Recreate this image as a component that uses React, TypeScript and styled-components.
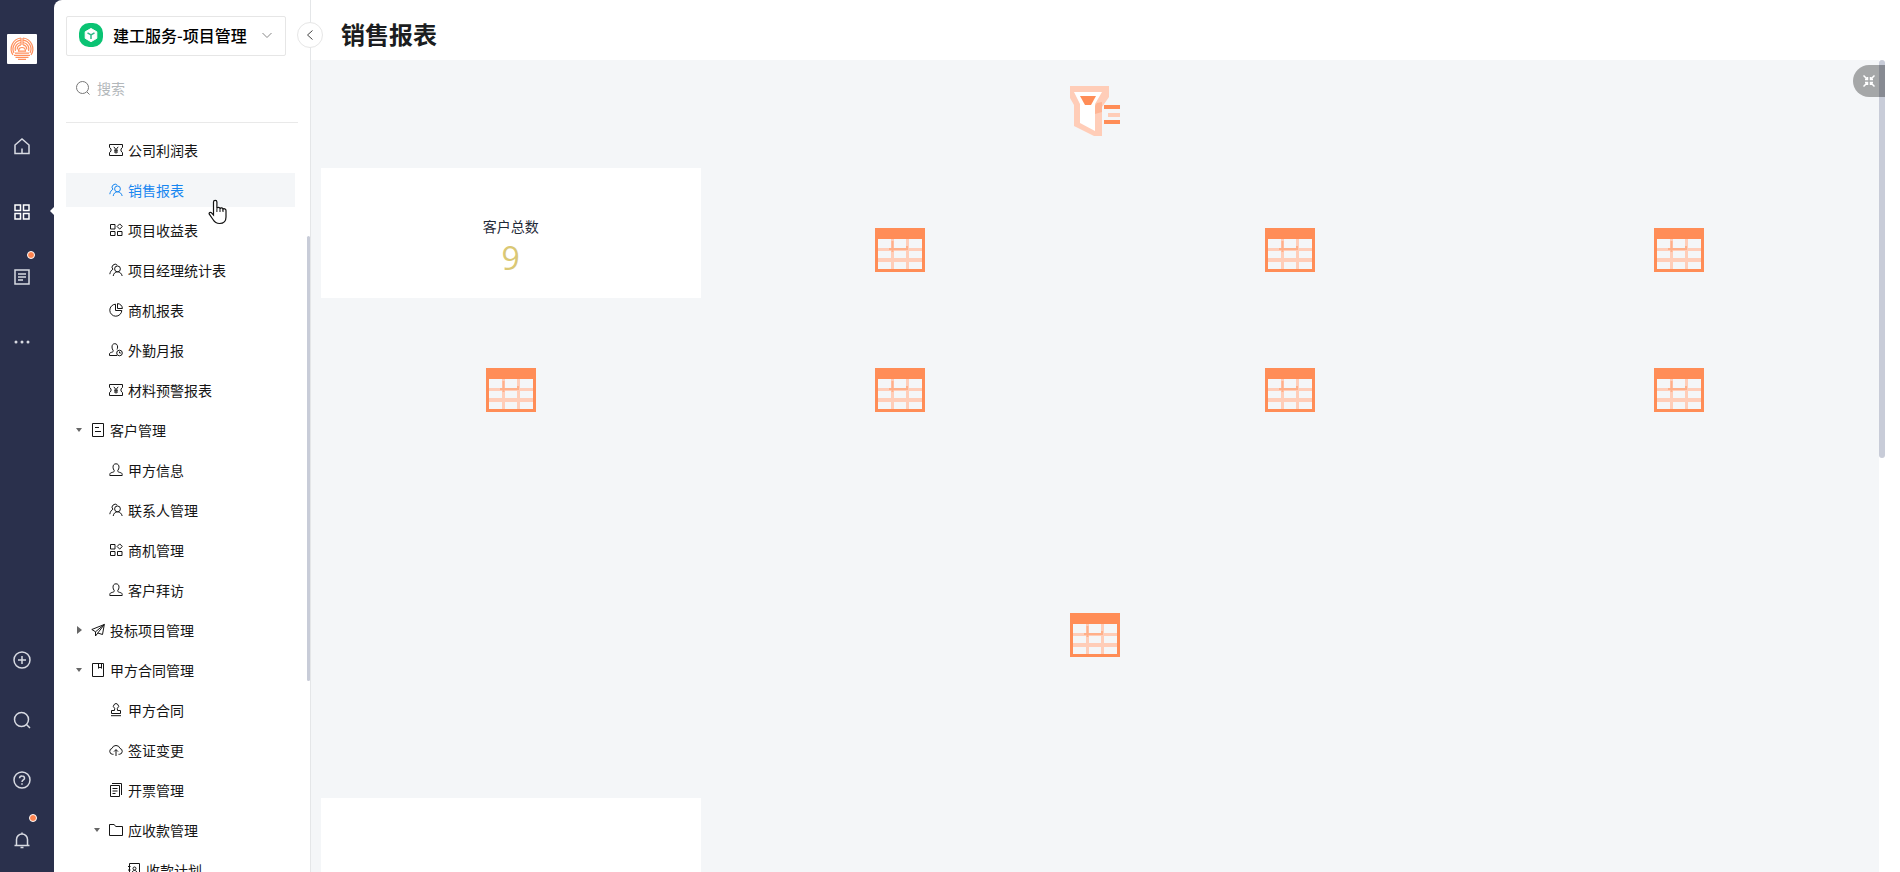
import React from "react";
import styled, { createGlobalStyle } from "styled-components";

const GlobalStyle = createGlobalStyle`
  * { box-sizing: border-box; }
  body {
    margin: 0;
    font-family: "Noto Sans CJK SC", "Liberation Sans", sans-serif;
    font-size: 14px;
    color: #151515;
    background: #fff;
  }
  button, input { font: inherit; color: inherit; }
  a { color: inherit; text-decoration: none; }
`;

/* ---------- icons ---------- */

type IconName =
  | "ticket" | "users" | "widgets" | "pie" | "userClock" | "user" | "form" | "send"
  | "bookmark" | "stamp" | "cloud" | "copy" | "folder" | "contact";

const shapes: Record<IconName, React.ReactNode> = {
  ticket: (
    <>
      <path d="M.5 1.5h13v2.800L12 6v2l1.500 1.700v2.800H.5V9.700L2 8V6L.5 4.300z" />
      <path d="M4.800 3.800 7 6.600l2.200-2.800M7 6.600v4M5 7.200h4M5 9h4" />
    </>
  ),
  users: (
    <>
      <path d="M8.500 8.800a2.900 2.900 0 1 0 0-5.800 2.900 2.900 0 0 0 0 5.800zM4.200 13c.4-2.600 2-4.200 4.300-4.200s4 1.600 4.700 4.200" />
      <path d="M8.300 2.200A2.900 2.900 0 1 0 3.900 6.300C2.200 7.200 1.200 8.900.8 11.200" />
    </>
  ),
  widgets: (
    <>
      <path d="M1.500 1.500h4.500v4.500H1.500zM1.500 8.500h4.500v4H1.500zM8.500 8.500h4.500v4H8.500z" />
      <path d="M10.700.9 13.300 3.500 10.700 6.100 8.100 3.500z" />
    </>
  ),
  pie: (
    <>
      <path d="M6.500 1.200a6 6 0 1 0 6.300 6.300H6.500z" />
      <path d="M8.500.6v4.900h4.900A5 5 0 0 0 8.500.6z" />
    </>
  ),
  userClock: (
    <>
      <path d="M8 12.500H.5V11c0-1 .7-1.300 2-1.700 1.500-.4 2-.8 1.700-1.800C3.400 6.500 3 5.500 3 4c0-2 1-3.300 2.800-3.300S8.600 2 8.600 4c0 1-.2 1.800-.6 2.500" />
      <circle cx="10.500" cy="10" r="2.800" />
      <path d="M10.500 8.500V10h1.300" />
    </>
  ),
  user: (
    <path d="M7 .8C5 .8 4 2.200 4 4.200c0 1.400.5 2.300 1.200 3.200.5 1-.2 1.500-1.900 2C1.500 9.900.8 10.200.8 11.500v1h12.400v-1c0-1.300-.7-1.600-2.500-2.100-1.700-.5-2.400-1-1.900-2C9.500 6.500 10 5.600 10 4.200 10 2.200 9 .8 7 .8z" />
  ),
  form: (
    <>
      <path d="M1.500.5h11v13h-11z" />
      <path d="M4 4.500h4M4 8.500h6" />
    </>
  ),
  send: <path d="M13.300 1.500.8 6.500l3.700 2.300L13.300 1.500 11.500 11.500 6.800 10zM4.500 8.800v4.200L6.800 10" />,
  bookmark: (
    <>
      <path d="M1.500.5h11v13h-11z" />
      <path d="M7.500.5v4.800L9 4l1.500 1.300V.5" />
    </>
  ),
  stamp: (
    <>
      <path d="M5.700 5.300a2.500 2.500 0 1 1 2.600 0l.2 2.200h3v3h-9v-3h3z" />
      <path d="M2 12.700h10" />
    </>
  ),
  cloud: (
    <>
      <path d="M4.500 11.300H3.600A3 3 0 0 1 3 5.400a4.200 4.200 0 0 1 8 0 3 3 0 0 1-.6 5.900h-.9" />
      <path d="M7 13V6.800M5 8.600l2-2 2 2" />
    </>
  ),
  copy: (
    <>
      <path d="M1.500 2.500h9v11h-9z" />
      <path d="M3 .5h9.500V12M3.500 5.500h5M3.500 8h5M3.500 10.500h3" />
    </>
  ),
  folder: <path d="M.5 1.500h4.700l1.500 2h6.800v9H.5z" />,
  contact: (
    <>
      <path d="M2.500.5h10v13h-10zM1 3.500h2.500M1 7h2.500M1 10.500h2.500" />
      <circle cx="7.500" cy="5.500" r="1.500" />
      <path d="M5 10c.2-1.600 1-2.500 2.500-2.500S9.800 8.400 10 10" />
    </>
  ),
};

const LineSvg = styled.svg`
  flex: none;
  display: block;
  fill: none;
  stroke: currentColor;
`;

const TreeIcon = ({ name }: { name: IconName }) => (
  <LineSvg width="14" height="14" viewBox="0 0 14 14" aria-hidden="true">{shapes[name]}</LineSvg>
);

const Brand = () => (
  <LineSvg width="30" height="30" viewBox="0 0 30 30" aria-hidden="true">
    <rect width="30" height="30" rx="1" fill="#fff" stroke="none" />
    <g stroke="#ff8f5c" strokeWidth="1.200">
      <path d="M14 4A11 11 0 0 0 6 21M16 4a11 11 0 0 1 8 17" />
      <path d="M14 6.200A8.800 8.800 0 0 0 7 19M16 6.200A8.800 8.800 0 0 1 23 19" />
      <path d="M14 8.500a6.600 6.600 0 0 0-5.600 8.500M16 8.500a6.600 6.600 0 0 1 5.600 8.500" />
      <path d="M14 10.800c-2.500.4-3.800 2.200-3.800 4.700M16 10.800c2.500.4 3.800 2.200 3.800 4.700M14 4v7M16 4v7" />
      <path d="M11.500 17.200c0-2.300 1.200-3.700 3.500-3.700s3.500 1.400 3.500 3.700z" />
      <path d="M8 19.200h14M7 21.300h16M8.500 23.300h13M11 25.300h8" />
    </g>
  </LineSvg>
);

const Cube = () => (
  <LineSvg width="24" height="24" viewBox="0 0 24 24" aria-hidden="true">
    <rect width="24" height="24" rx="10" fill="#0ac373" stroke="none" />
    <path d="M12 5.500 17.800 8.800v6.500L12 18.700l-5.800-3.400V8.800z" fill="#fff" stroke="#fff" strokeLinejoin="round" />
    <path d="m8.500 9.800 3.500 2 3.500-2M12 11.800V16" stroke="#32b98a" strokeWidth="1.500" />
  </LineSvg>
);

const TableGlyph = () => (
  <svg width="50" height="44" viewBox="0 0 50 44" role="img" aria-label="表格">
    <path d="M0 0h50v44H0z" fill="#ff8d57" />
    <path d="M3 11h44v30H3z" fill="#ffcdb8" />
    <g fill="#f4f6f8">
      <path d="M3 11h13v9H3zM19 11h12v9H19zM34 11h13v9H34z" />
      <path d="M3 23h13v7H3zM19 23h12v7H19zM34 23h13v7H34z" />
      <path d="M3 34h13v7H3zM19 34h12v7H19zM34 34h13v7H34z" />
    </g>
    <path d="M14 21h18v-3M17.500 13v11" fill="none" stroke="#ffb08a" strokeWidth="2" />
  </svg>
);

const FilterGlyph = () => (
  <svg width="50" height="50" viewBox="0 0 50 50" role="img" aria-label="筛选">
    <path d="M2.500 3h34v8l-7 9.500V47L23 46.500 7 38V18.500L2.500 11z" fill="#fff" stroke="none" />
    <path d="M0 0h39v11l-7 10v29h-8L4 40V19L0 12zM4 6l6 12v19l15 8V18l7-12z" fill="#ffcdb8" fillRule="evenodd" />
    <path d="M10 10h16l-5 9h-6z" fill="#ff8d57" />
    <path d="M27 17l5-1v10l-7 2v-8z" fill="#ffb595" />
    <path d="M34 19h16v4H34zM34 34h16v4H34z" fill="#ff8d57" />
    <path d="M38 27h12v4H38z" fill="#ffcdb8" />
  </svg>
);

/* ---------- layout ---------- */

const Shell = styled.div`
  display: flex;
  height: 100vh;
  overflow: hidden;
  background: #2a304c;
`;

const Rail = styled.nav`
  flex: none;
  display: flex;
  flex-direction: column;
  align-items: center;
  width: 54px;
  padding: 34px 10px 2px 0;
  color: #d8dae2;
`;

const RailGroup = styled.div<{ $end?: boolean }>`
  display: flex;
  flex-direction: column;
  margin-top: ${(p) => (p.$end ? "auto" : "50px")};
`;

const RailButton = styled.button<{ $tall?: boolean; $active?: boolean }>`
  position: relative;
  display: flex;
  align-items: center;
  justify-content: center;
  width: 44px;
  height: ${(p) => (p.$tall ? 65 : 60)}px;
  padding: 0;
  border: 0;
  background: none;
  color: ${(p) => (p.$active ? "#fff" : "inherit")};
`;

const Dot = styled.span<{ $low?: boolean }>`
  position: absolute;
  top: ${(p) => (p.$low ? 7 : 4)}px;
  right: ${(p) => (p.$low ? 9 : 7)}px;
  width: 8px;
  height: 8px;
  border: 1px solid #fff;
  border-radius: 50%;
  background: #ff8450;
`;

const Notch = styled.span`
  position: absolute;
  right: -10px;
  top: 28px;
  border: 4px solid transparent;
  border-left: 0;
  border-right-color: #fff;
`;

const Sidebar = styled.aside`
  position: relative;
  flex: none;
  display: flex;
  flex-direction: column;
  width: 257px;
  padding: 16px 12px 0;
  border-right: 1px solid #e4e6e8;
  border-top-left-radius: 8px;
  background: #fff;
`;

const Switcher = styled.button`
  flex: none;
  display: flex;
  align-items: center;
  gap: 10px;
  width: 220px;
  height: 40px;
  padding: 0 12px 2px;
  border: 1px solid #e6e6e6;
  border-radius: 2px;
  background: #fff;
  color: #000;
  font-size: 16px;
  font-weight: 500;
  line-height: 24px;
  svg:last-child { margin-left: auto; color: #888; }
`;

const Collapse = styled.button`
  position: absolute;
  z-index: 1;
  top: 22px;
  right: -13px;
  display: flex;
  align-items: center;
  justify-content: center;
  width: 26px;
  height: 26px;
  padding: 0;
  border: 1px solid #e6e6e6;
  border-radius: 50%;
  background: #fff;
  color: #444;
`;

const Search = styled.label`
  flex: none;
  display: flex;
  align-items: center;
  gap: 6px;
  height: 67px;
  padding: 0 0 2px 10px;
  border-bottom: 1px solid #e9e9e9;
  color: #777;
`;

const SearchInput = styled.input`
  flex: 1;
  min-width: 0;
  height: 24px;
  padding: 0;
  border: 0;
  outline: 0;
  background: none;
  &::placeholder { color: #b3b8bb; opacity: 1; }
`;

const Tree = styled.ul`
  flex: 1;
  min-height: 0;
  display: flex;
  flex-direction: column;
  gap: 6px;
  margin: 0;
  padding: 10px 3px 0 0;
  overflow: hidden;
  list-style: none;
`;

const TreeLink = styled.a<{ $level: number; $active?: boolean }>`
  display: flex;
  align-items: center;
  gap: 5px;
  height: 34px;
  padding-left: ${(p) => 6 + p.$level * 18}px;
  line-height: 20px;
  white-space: nowrap;
  background: ${(p) => (p.$active ? "#f4f6f8" : "transparent")};
  color: ${(p) => (p.$active ? "#1786f0" : "inherit")};
`;

const Caret = styled.span<{ $state?: "open" | "closed" }>`
  flex: none;
  display: flex;
  justify-content: center;
  width: 14px;
  &::before {
    content: "";
    display: ${(p) => (p.$state ? "block" : "none")};
    border: 4px solid transparent;
    border-width: ${(p) => (p.$state === "closed" ? "4px 0 4px 5px" : "4px 3px 0")};
    ${(p) => (p.$state === "closed" ? "border-left-color: #666;" : "border-top-color: #666;")}
  }
`;

const SideThumb = styled.span`
  position: absolute;
  top: 236px;
  right: 0;
  width: 3px;
  height: 445px;
  border-radius: 2px;
  background: #c8ccd8;
`;

const Pointer = styled.svg`
  position: absolute;
  z-index: 2;
  left: 154px;
  top: 199px;
`;

const Main = styled.main`
  position: relative;
  flex: 1;
  min-width: 0;
  display: flex;
  flex-direction: column;
  background: #fff;
`;

const Header = styled.header`
  flex: none;
  display: flex;
  align-items: center;
  height: 60px;
  padding: 8px 30px 0;
`;

const Title = styled.h1`
  margin: 0;
  color: #1b1d20;
  font-size: 24px;
  font-weight: 700;
  line-height: 36px;
`;

const Body = styled.div`
  flex: 1;
  min-height: 0;
  display: flex;
  padding-right: 15px;
`;

const Board = styled.div`
  flex: 1;
  display: grid;
  grid-template-columns: repeat(4, 1fr);
  grid-template-rows: 88px 130px 130px 340px 130px;
  gap: 10px;
  padding: 10px;
  overflow: hidden;
  background: #f4f6f8;
`;

const Track = styled.div`
  flex: none;
  width: 6px;
`;

const Thumb = styled.div`
  height: 49%;
  border-radius: 3px;
  background: #c8ccd8;
`;

const Tile = styled.section<{ $wide?: boolean; $filter?: boolean }>`
  grid-column: ${(p) => (p.$wide ? "1 / -1" : "auto")};
  display: flex;
  align-items: center;
  justify-content: center;
  padding: ${(p) => (p.$filter ? "0 0 6px" : "34px 0 0")};
`;

const Card = styled.section`
  display: flex;
  flex-direction: column;
  align-items: center;
  padding-top: 48px;
  background: #fff;
`;

const CardLabel = styled.span`
  color: #1f2a38;
  line-height: 20px;
`;

const CardValue = styled.strong`
  color: #dac875;
  font-family: "Open Sans", "Noto Sans CJK SC", sans-serif;
  font-size: 32px;
  font-weight: 400;
  line-height: 44px;
`;

const Shrink = styled.button`
  position: absolute;
  top: 65px;
  right: 15px;
  display: flex;
  align-items: center;
  width: 32px;
  height: 32px;
  padding: 0 0 0 10px;
  border: 0;
  border-radius: 16px 0 0 16px;
  background: rgba(0, 0, 0, 0.32);
  color: #fff;
`;

/* ---------- data ---------- */

interface Node {
  label: string;
  icon: IconName;
  level: number;
  caret?: "open" | "closed";
  active?: boolean;
}

const nodes: Node[] = [
  { label: "公司利润表", icon: "ticket", level: 1 },
  { label: "销售报表", icon: "users", level: 1, active: true },
  { label: "项目收益表", icon: "widgets", level: 1 },
  { label: "项目经理统计表", icon: "users", level: 1 },
  { label: "商机报表", icon: "pie", level: 1 },
  { label: "外勤月报", icon: "userClock", level: 1 },
  { label: "材料预警报表", icon: "ticket", level: 1 },
  { label: "客户管理", icon: "form", level: 0, caret: "open" },
  { label: "甲方信息", icon: "user", level: 1 },
  { label: "联系人管理", icon: "users", level: 1 },
  { label: "商机管理", icon: "widgets", level: 1 },
  { label: "客户拜访", icon: "user", level: 1 },
  { label: "投标项目管理", icon: "send", level: 0, caret: "closed" },
  { label: "甲方合同管理", icon: "bookmark", level: 0, caret: "open" },
  { label: "甲方合同", icon: "stamp", level: 1 },
  { label: "签证变更", icon: "cloud", level: 1 },
  { label: "开票管理", icon: "copy", level: 1 },
  { label: "应收款管理", icon: "folder", level: 1, caret: "open" },
  { label: "收款计划", icon: "contact", level: 2 },
];

const RailIcon = ({ children }: { children: React.ReactNode }) => (
  <LineSvg width="18" height="18" viewBox="0 0 18 18" strokeWidth="1.500" aria-hidden="true">{children}</LineSvg>
);

export default function App() {
  return (
    <>
      <GlobalStyle />
      <Shell>
        <Rail>
          <Brand />
          <RailGroup>
            <RailButton $tall aria-label="首页">
              <RailIcon><path d="M2 7 9 1l7 6v8.500H2zM9 15.500v-5" /></RailIcon>
            </RailButton>
            <RailButton $tall $active aria-label="应用">
              <RailIcon><path d="M2 2h5.500v5.500H2zM10.500 2H16v5.500h-5.500zM2 10.500h5.500V16H2zM10.500 10.500H16V16h-5.500z" /></RailIcon>
              <Notch />
            </RailButton>
            <RailButton $tall aria-label="任务">
              <RailIcon><path d="M2 2h14v14H2zM5 6h8M5 9h8M5 12h5" /></RailIcon>
              <Dot $low />
            </RailButton>
            <RailButton $tall aria-label="更多">
              <RailIcon>
                <g fill="currentColor" stroke="none">
                  <circle cx="3" cy="9" r="1.500" /><circle cx="9" cy="9" r="1.500" /><circle cx="15" cy="9" r="1.500" />
                </g>
              </RailIcon>
            </RailButton>
          </RailGroup>
          <RailGroup $end>
            <RailButton aria-label="新建">
              <RailIcon><circle cx="9" cy="9" r="8" /><path d="M9 5v8M5 9h8" /></RailIcon>
            </RailButton>
            <RailButton aria-label="查找">
              <RailIcon><circle cx="8.500" cy="8.500" r="7" /><path d="m13.500 13.500 3.500 3.500" /></RailIcon>
            </RailButton>
            <RailButton aria-label="帮助">
              <RailIcon>
                <circle cx="9" cy="9" r="8" />
                <path d="M6.500 7.200A2.400 2.400 0 0 1 9 5c1.400 0 2.500.9 2.500 2.200C11.500 9 9 8.900 9 11M9 12.300v1.500" />
              </RailIcon>
            </RailButton>
            <RailButton aria-label="通知">
              <RailIcon><path d="M1.500 14.500h15M3.500 14.500V8.500a5.500 5.500 0 0 1 11 0v6M9 1.500V3M7.500 16.500h3" /></RailIcon>
              <Dot />
            </RailButton>
          </RailGroup>
        </Rail>

        <Sidebar>
          <Switcher>
            <Cube />
            建工服务-项目管理
            <LineSvg width="12" height="12" viewBox="0 0 12 12" aria-hidden="true"><path d="m1.500 4 4.500 4.500L10.500 4" /></LineSvg>
          </Switcher>
          <Collapse aria-label="收起">
            <LineSvg width="12" height="12" viewBox="0 0 12 12" aria-hidden="true"><path d="M8.500 1.500 3.500 6l5 4.500" /></LineSvg>
          </Collapse>
          <Search>
            <LineSvg width="15" height="15" viewBox="0 0 15 15" aria-hidden="true">
              <circle cx="6.500" cy="6.500" r="6" /><path d="m11 11 2.500 2.500" />
            </LineSvg>
            <SearchInput type="search" placeholder="搜索" aria-label="搜索" />
          </Search>
          <Tree>
            {nodes.map((n) => (
              <li key={n.label}>
                <TreeLink href="#" $level={n.level} $active={n.active} aria-current={n.active ? "page" : undefined}>
                  <Caret $state={n.caret} />
                  <TreeIcon name={n.icon} />
                  {n.label}
                </TreeLink>
              </li>
            ))}
          </Tree>
          <SideThumb />
          <Pointer width="20" height="26" viewBox="0 0 20 26" aria-hidden="true">
            <path
              d="M5.500 16V3a1.700 1.700 0 0 1 3.400 0v6.500c.2-1.500 2.900-1.500 3.100.2.400-1.200 2.800-1 3 .6.500-1 3-.7 3 1.200V18c0 4-2.500 6.500-6.500 6.500-3.500 0-5-1.500-6.500-4l-3.700-5.300c-.7-1.400 1-2.500 2.200-1.400z"
              fill="#fff" stroke="#111" strokeWidth="1.200"
            />
            <path d="M8.900 9.500V13M12 9.700V13M15 10.300V13" stroke="#111" />
          </Pointer>
        </Sidebar>

        <Main>
          <Header><Title>销售报表</Title></Header>
          <Body>
            <Board>
              <Tile $wide $filter><FilterGlyph /></Tile>
              <Card>
                <CardLabel>客户总数</CardLabel>
                <CardValue>9</CardValue>
              </Card>
              {[1, 2, 3, 4, 5, 6, 7].map((k) => <Tile key={k}><TableGlyph /></Tile>)}
              <Tile $wide><TableGlyph /></Tile>
              <Card />
            </Board>
            <Track><Thumb /></Track>
          </Body>
          <Shrink aria-label="退出全屏">
            <LineSvg width="12" height="12" viewBox="0 0 12 12" strokeWidth="1.500" aria-hidden="true">
              <path d="m.5.5 4 4M11.500.5l-4 4M.5 11.500l4-4M11.500 11.500l-4-4M4.500 2v2.500H2M7.500 2v2.500H10M4.500 10V7.500H2M7.500 10V7.500H10" />
            </LineSvg>
          </Shrink>
        </Main>
      </Shell>
    </>
  );
}
